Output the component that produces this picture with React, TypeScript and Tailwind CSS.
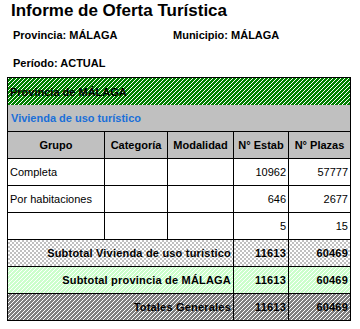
import React from "react";

const font = { fontFamily: '"Liberation Sans", Arial, sans-serif' };

const rows = [
  { g: "Completa", e: "10962", p: "57777" },
  { g: "Por habitaciones", e: "646", p: "2677" },
  { g: "", e: "5", p: "15" },
];

export default function App() {
  return (
    <div className="w-[360px] h-[329px] bg-white text-black overflow-hidden" style={font}>
      <div className="pt-[1px] pl-[11px] h-[21px] text-[17px] leading-[20px] font-bold">
        Informe de Oferta Turística
      </div>
      <div className="mt-[7px] h-[14px] flex text-[11px] leading-[14px] font-bold">
        <div className="pl-[13px] w-[173px]">Provincia: MÁLAGA</div>
        <div>Municipio: MÁLAGA</div>
      </div>
      <div className="mt-[14px] h-[14px] pl-[13px] text-[11px] leading-[14px] font-bold">
        Período: ACTUAL
      </div>
      <div className="mt-[7px] ml-[7px] w-[344px] border border-black text-[11px] leading-[14px]">
        <div className="h-[27px] flex items-center pl-[2px] font-bold bg-[linear-gradient(135deg,#ffffff_0_12.5%,#008000_12.5%_50%,#ffffff_50%_62.5%,#008000_62.5%_100%)] bg-[length:4px_4px]">
          Provincia de MÁLAGA
        </div>
        <div className="h-[27px] flex items-center pl-[3px] font-bold text-[#1a6fd8] bg-[#c0c0c0] border-b border-black">
          Vivienda de uso turístico
        </div>
        <div className="h-[27px] grid grid-cols-[97px_63px_66px_55px_61px] bg-[#c0c0c0] border-b border-black font-bold">
          <div className="flex items-center justify-center border-r border-black">Grupo</div>
          <div className="flex items-center justify-center border-r border-black">Categoría</div>
          <div className="flex items-center justify-center border-r border-black">Modalidad</div>
          <div className="flex items-center justify-center border-r border-black">N° Estab</div>
          <div className="flex items-center justify-center">N° Plazas</div>
        </div>
        {rows.map((r, i) => (
          <div key={i} className="h-[27px] grid grid-cols-[97px_63px_66px_55px_61px] border-b border-black">
            <div className="flex items-center pl-[2px] border-r border-black">{r.g}</div>
            <div className="border-r border-black"></div>
            <div className="border-r border-black"></div>
            <div className="flex items-center justify-end pr-[2px] border-r border-black">{r.e}</div>
            <div className="flex items-center justify-end pr-[2px]">{r.p}</div>
          </div>
        ))}
        <div className="h-[27px] grid grid-cols-[226px_55px_61px] border-b border-black font-bold tracking-[0.2px] bg-[conic-gradient(#c0c0c0_25%,#ffffff_0_50%,#c0c0c0_0_75%,#ffffff_0)] bg-[length:4px_4px]">
          <div className="flex items-center justify-end pr-[2px] border-r border-black">Subtotal Vivienda de uso turístico</div>
          <div className="flex items-center justify-end pr-[2px] border-r border-black">11613</div>
          <div className="flex items-center justify-end pr-[2px]">60469</div>
        </div>
        <div className="h-[27px] grid grid-cols-[226px_55px_61px] border-b border-black font-bold tracking-[0.2px] bg-[linear-gradient(135deg,#ffffff_0_12.5%,#ccffcc_12.5%_50%,#ffffff_50%_62.5%,#ccffcc_62.5%_100%)] bg-[length:4px_4px]">
          <div className="flex items-center justify-end pr-[2px] border-r border-black">Subtotal provincia de MÁLAGA</div>
          <div className="flex items-center justify-end pr-[2px] border-r border-black">11613</div>
          <div className="flex items-center justify-end pr-[2px]">60469</div>
        </div>
        <div className="h-[26px] grid grid-cols-[226px_55px_61px] font-bold tracking-[0.2px] bg-[linear-gradient(135deg,#ffffff_0_12.5%,#808080_12.5%_50%,#ffffff_50%_62.5%,#808080_62.5%_100%)] bg-[length:4px_4px]">
          <div className="flex items-center justify-end pr-[2px] border-r border-black">Totales Generales</div>
          <div className="flex items-center justify-end pr-[2px] border-r border-black">11613</div>
          <div className="flex items-center justify-end pr-[2px]">60469</div>
        </div>
      </div>
    </div>
  );
}
